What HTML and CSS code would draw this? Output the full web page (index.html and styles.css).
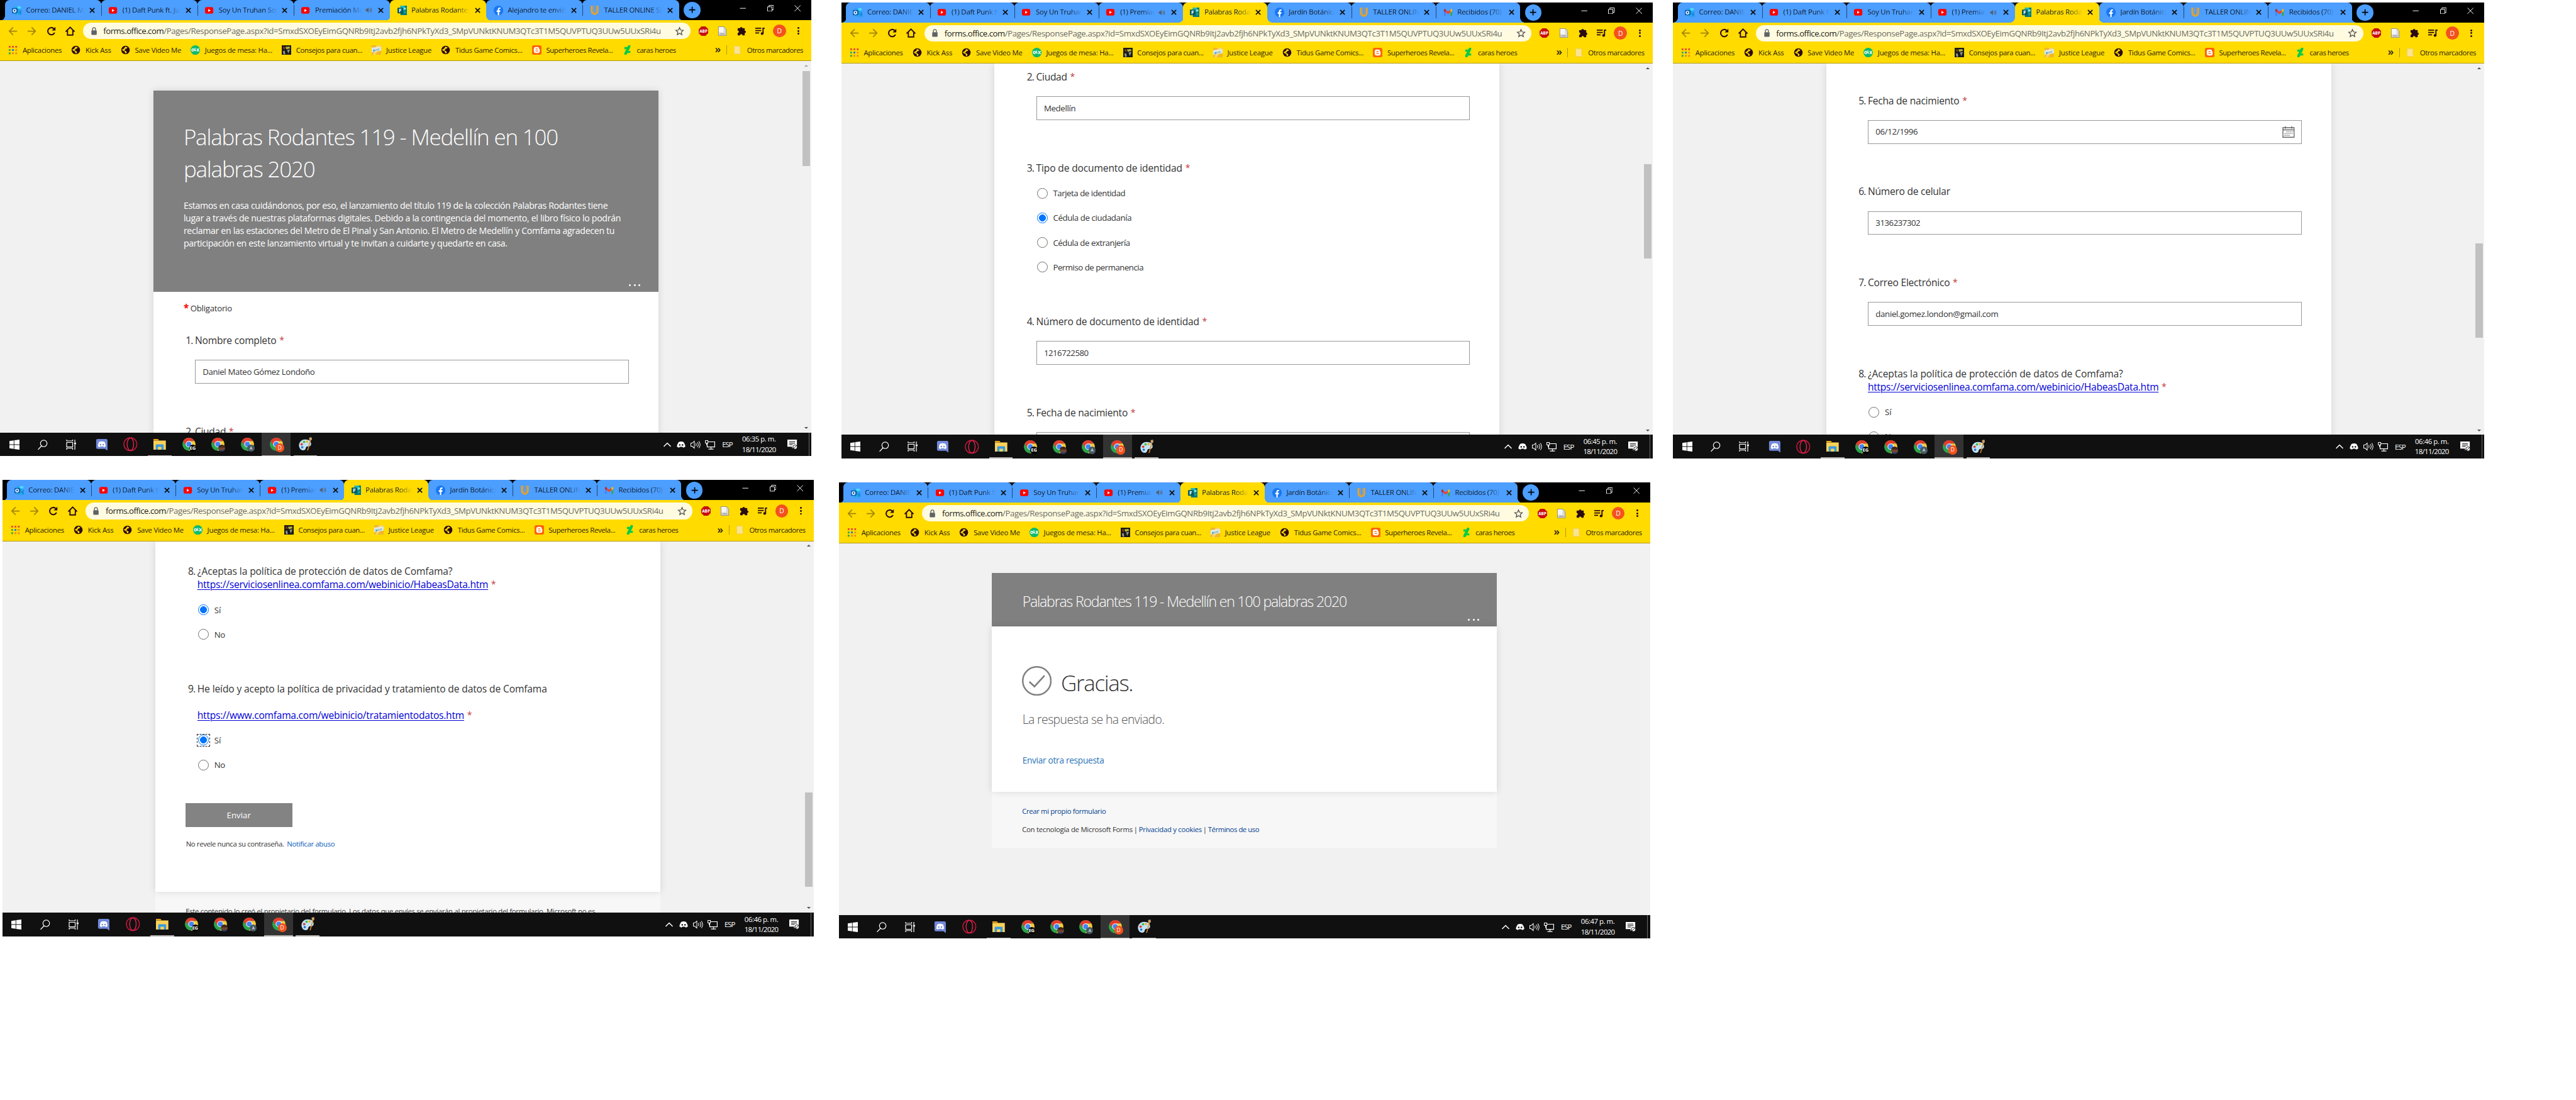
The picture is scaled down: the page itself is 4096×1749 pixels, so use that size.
FILE: index.html
```html
<!DOCTYPE html>
<html lang="es">
<head>
<meta charset="utf-8">
<title>Palabras Rodantes 119</title>
<link rel="stylesheet" href="styles.css">
</head>
<body>
<svg width="0" height="0" class="sprite" aria-hidden="true">
  <symbol id="outlook" viewBox="0 0 16 16"><path fill="#28a8ea" d="M4 1h11v9H4z"/><path fill="#50d9ff" d="M9 1h6v4H9z"/><path fill="#0364b8" d="M4 5h6v6H4z"/><path fill="#1490df" d="M4 15l12-8v8H4z"/><path fill="#28a8ea" d="M5 8l11 8H5z"/><rect x="0" y="4" width="9" height="9" rx="1" fill="#0a5fb4"/><circle cx="4.5" cy="8.500" r="2.300" fill="none" stroke="#fff" stroke-width="1.500"/></symbol>
  <symbol id="youtube" viewBox="0 0 16 16"><rect x="1" y="2.500" width="14" height="11" rx="3" fill="#f00"/><path fill="#fff" d="M6.500 5.500l4 2.500-4 2.500z"/></symbol>
  <symbol id="forms" viewBox="0 0 16 16"><path fill="#037b7f" d="M5 0h11v16H5z"/><path fill="#20b8bc" d="M5 0h7v8H5z"/><circle cx="12.500" cy="5" r="2" fill="#7fe3e0"/><circle cx="12.500" cy="11" r="2" fill="#1aa3a6"/><rect y="3.500" width="9.500" height="9.500" rx="1" fill="#035c60"/><path fill="none" stroke="#fff" stroke-width="1.400" d="M3.600 11V6h3.200M3.600 8.400h2.700"/></symbol>
  <symbol id="facebook" viewBox="0 0 16 16"><circle cx="8" cy="8" r="8" fill="#1877f2"/><path fill="#fff" d="M6.900 16v-5.500H5V8h1.900V6.300c0-2 1.200-3.100 2.900-3.100l1.600.1v2h-1c-.9 0-1.200.5-1.200 1.100V8h2.100l-.4 2.500H9.200V16z"/></symbol>
  <symbol id="u" viewBox="0 0 16 16"><path fill="none" stroke="#e8a22a" stroke-width="3" d="M3 0v9q0 3.500 5 5.300Q13 12.500 13 9V0"/><path fill="none" stroke="#c9a050" d="M6 0v9q0 2 2 2.500Q10 11 10 9V0"/></symbol>
  <symbol id="gmail" viewBox="0 0 16 16"><path fill="#4285f4" d="M1 6l3 2v6H2q-1 0-1-1z"/><path fill="#34a853" d="M12 8l3-2v7q0 1-1 1h-2z"/><path fill="#ea4335" d="M4 4l4 3 4-3v4l-4 3-4-3z"/><path fill="#c5221f" d="M1 4q0-2 2-1.500L4 3.300V8L1 6z"/><path fill="#fbbc04" d="M15 4q0-2-2-1.500l-1 .8V8l3-2z"/></symbol>
  <symbol id="x" viewBox="0 0 16 16"><path fill="none" stroke="#111" stroke-width="1.900" d="M4.200 4.200l7.600 7.600M11.800 4.200l-7.600 7.600"/></symbol>
  <symbol id="audio" viewBox="0 0 16 16"><path fill="#555f70" d="M3 6h2l3-3v10L5 10H3z"/><path fill="none" stroke="#555f70" stroke-width="1.200" d="M10 5.500q1.500 2.500 0 5M12 4q2.500 4 0 8"/></symbol>
  <symbol id="plus" viewBox="0 0 16 16"><path fill="none" stroke="#000" stroke-width="2" d="M8 2v12M2 8h12"/></symbol>
  <symbol id="back" viewBox="0 0 16 16"><path fill="none" stroke="#a4850a" stroke-width="1.900" d="M15 8H2M8.300 1.500L2 8l6.300 6.500"/></symbol>
  <symbol id="fwd" viewBox="0 0 16 16"><path fill="none" stroke="#a4850a" stroke-width="1.900" d="M1 8h13M7.700 1.500L14 8l-6.300 6.500"/></symbol>
  <symbol id="reload" viewBox="0 0 16 16"><path fill="none" stroke="#2b0b12" stroke-width="2.200" d="M13.600 10.500A6 6 0 1 1 12.300 3.700"/><path fill="#2b0b12" d="M15 .8V7H8.800z"/></symbol>
  <symbol id="home" viewBox="0 0 16 16"><path fill="none" stroke="#2b0b12" stroke-width="2" d="M3.500 14.500V8H1.400L8 1.400 14.600 8h-2.100v6.500z"/></symbol>
  <symbol id="lock" viewBox="0 0 16 16"><rect x="3.500" y="6.500" width="9" height="7.800" rx="1" fill="#5f6368"/><path fill="none" stroke="#5f6368" stroke-width="1.500" d="M5.500 7V4.500a2.500 2.500 0 0 1 5 0V7"/></symbol>
  <symbol id="star" viewBox="0 0 16 16"><path fill="none" stroke="#4c4a4a" stroke-width="1.300" d="M8 2l1.800 4.100 4.500.4-3.400 3 1 4.400L8 11.600l-3.900 2.300 1-4.400-3.400-3 4.500-.4z"/></symbol>
  <symbol id="abp" viewBox="0 0 16 16"><path fill="#c70d12" d="M4.700 0h6.600L16 4.700v6.600L11.300 16H4.700L0 11.300V4.700z"/><text x="8" y="10.600" font-size="6.800" font-weight="700" text-anchor="middle" fill="#fff" textLength="13.500" lengthAdjust="spacingAndGlyphs">ABP</text></symbol>
  <symbol id="doc" viewBox="0 0 16 16"><path fill="#d9d9d9" stroke="#888" d="M1.500.500h9l4 4v11h-13z"/><path fill="#f6f6f6" d="M2 1h8v9H2z"/><path fill="#9a9a9a" d="M4 12h8v1.500H4z"/></symbol>
  <symbol id="puzzle" viewBox="0 0 16 16"><path fill="#2b0b12" d="M6 3a2 2 0 0 1 4 0h3q1 0 1 1v3.300a1.900 1.900 0 0 1 0 3.800V14q0 1-1 1h-2.800a2.100 2.100 0 0 0-4.200 0H3q-1 0-1-1v-3a2 2 0 0 0 0-4V4q0-1 1-1z"/></symbol>
  <symbol id="media" viewBox="0 0 16 16"><path fill="none" stroke="#2b0b12" stroke-width="2" d="M0 3h10M0 7h10M0 11h6.500M13 12V3h3"/><circle cx="11.500" cy="12" r="2.300" fill="#2b0b12"/></symbol>
  <symbol id="apps" viewBox="0 0 16 16"><path fill="#ea4335" d="M1 1h3v3H1zM6.500 1h3v3h-3zM12 1h3v3h-3z"/><path fill="#34a853" d="M1 6.500h3v3H1zM1 12h3v3H1z"/><path fill="#1a73e8" d="M6.500 6.500h3v3h-3z"/><path fill="#f08a1c" d="M12 6.500h3v3h-3zM6.500 12h3v3h-3zM12 12h3v3h-3z"/></symbol>
  <symbol id="globe" viewBox="0 0 16 16"><circle cx="8" cy="8" r="7.200" fill="#2b0b12"/><path fill="#ffdb00" d="M7.500 2.200l3.800 1.400-1.600 2-2 .2-.4 2-2.600.6 3.500 1 2 2-1.500 2.600-1.500-.8-.2-2.400L3.500 9 2 7.500l1.800-1L6 5z"/></symbol>
  <symbol id="olx" viewBox="0 0 16 16"><circle cx="8" cy="8" r="8" fill="#0dbb70"/><circle cx="3.900" cy="8" r="1.900" fill="none" stroke="#fff" stroke-width="1.400"/><path fill="none" stroke="#fff" stroke-width="1.400" d="M7.500 4.500v4.300h2M10.500 5.500l4 5M14.500 5.500l-4 5"/></symbol>
  <symbol id="photo" viewBox="0 0 16 16"><path fill="#1c1a16" d="M0 0h16v16H0z"/><path fill="#b7b43c" d="M6 3l7-1 1 3-6 2z"/><path fill="#7e3a1e" d="M2 2l3 1 1 3-3 1z"/><path fill="#8f9a90" d="M9 8l5-1-3 7zM2 10l3-1 1 6H3z"/></symbol>
  <symbol id="justice" viewBox="0 0 16 16"><path fill="#f2b72a" d="M0 0h16v16H0z"/><path fill="#d8e7f2" d="M0 4l16-2v7L0 12z"/><path fill="#4c9bd6" d="M2 8l11-3-1 3-9 3z"/><path fill="#fff0b0" d="M8 0h8L6 16H2z" opacity=".5"/></symbol>
  <symbol id="blogger" viewBox="0 0 16 16"><rect width="16" height="16" rx="3" fill="#ff6400"/><path fill="#fff" d="M6.500 3h2.600Q12 3 12 5.800q0 1.200 1 1.200v2.900Q13 13 9.900 13H6.200Q3 13 3 9.900V6q0-3 3.500-3z"/><path fill="none" stroke="#ff6400" stroke-width="1.300" stroke-linecap="round" d="M6.300 6.300H9M6.300 9.700h3.600"/></symbol>
  <symbol id="deviant" viewBox="0 0 16 16"><path fill="#05cc47" d="M13 0v3.200L9.700 9.500H13V13H8L6.600 16H3v-3.200l3.300-6.300H3V3h5L9.500 0z"/></symbol>
  <symbol id="folder" viewBox="0 0 16 16"><path fill="#fbe48f" stroke="#f0cf5c" d="M2.500 1.500h10v10h1v3h-11z"/></symbol>
  <symbol id="win" viewBox="0 0 16 16"><path fill="#fff" d="M0 2.200L6.800 1.200v6.300H0zM7.700 1.100L16 0v7.500H7.700zM0 8.500h6.800v6.300L0 13.800zM7.700 8.500H16V16l-8.300-1.100z"/></symbol>
  <symbol id="search" viewBox="0 0 16 16"><circle cx="9.500" cy="6" r="5.200" fill="none" stroke="#fff" stroke-width="1.200"/><path stroke="#fff" stroke-width="1.300" d="M6 10L.500 15.800"/></symbol>
  <symbol id="task" viewBox="0 0 16 16"><path fill="none" stroke="#fff" stroke-width="1.200" d="M1 4.500h9.500v7H1zM1 0v2h9.500V0M1 16v-2.300h9.500V16M14 0v4M14 8v8"/><path fill="#fff" d="M12.800 4.500h3v3h-3z"/></symbol>
  <symbol id="discord" viewBox="0 0 20 22"><path fill="#7289da" d="M2.500 1h15Q20 1 20 3.500V22l-4-3.500H2.500Q0 18.500 0 16V3.500Q0 1 2.500 1z"/><path fill="#fff" d="M5 6.500q5-2.500 10 0 2 4 1.800 7.500-1.600 1.300-3.300 1.400l-.9-1.400q-2.600.6-5.200 0l-.9 1.400Q4.800 15.300 3.200 14 3 10.500 5 6.500z"/><circle cx="7.600" cy="11" r="1.400" fill="#7289da"/><circle cx="12.400" cy="11" r="1.400" fill="#7289da"/></symbol>
  <symbol id="opera" viewBox="0 0 24 24"><circle cx="12" cy="12" r="11" fill="none" stroke="#c8163c" stroke-width="1.600"/><ellipse cx="12" cy="12" rx="5.500" ry="10.500" fill="none" stroke="#e0244c" stroke-width="1.500"/></symbol>
  <symbol id="explorer" viewBox="0 0 22 20"><path fill="#e8a416" d="M0 0h8l2 2.500H0z"/><path fill="#ffd257" d="M0 3h22v16H0z"/><path fill="#3a9bdc" d="M4 19v-8q0-1.500 1.500-1.500h11Q18 9.500 18 11v8h-4v-5H8v5z"/></symbol>
  <symbol id="chrome" viewBox="0 0 24 24"><circle cx="12" cy="12" r="11" fill="#2ca24c"/><path fill="#e33b2e" d="M2.500 6.500A11 11 0 0 1 21.500 6.500L12 7l-5 7z"/><path fill="#fcc934" d="M12 7h9.800A11 11 0 0 1 11.500 23l5-8.500z"/><circle cx="12" cy="12" r="5.300" fill="#fff"/><circle cx="12" cy="12" r="4.200" fill="#4285f4"/></symbol>
  <symbol id="paint" viewBox="0 0 24 24"><path fill="#bfe3f5" d="M12 4C4 4 0 11 2 17q2 6 8 5 3-1 3-4 1-3 5-2 4-1 4-5 0-7-10-7z"/><circle cx="6" cy="12" r="2" fill="#e23b2e"/><circle cx="10" cy="8" r="2" fill="#4bb543"/><circle cx="15" cy="7.500" r="2" fill="#f2b01e"/><circle cx="7" cy="17" r="2" fill="#2f73d0"/><path fill="#e0882a" d="M20 5l1.500.5L17 22l-2 1z"/><path fill="#c9a06a" d="M18.500 1l4-1 1 4-2.500 2-2-1z"/></symbol>
  <symbol id="chev" viewBox="0 0 16 16"><path fill="none" stroke="#fff" stroke-width="1.500" d="M2.500 11L8 5.500l5.500 5.500"/></symbol>
  <symbol id="discordw" viewBox="0 0 16 16"><path fill="#fff" d="M4 4q4-1.800 8 0 2.600 4 2.700 7-1.800 1.600-3.600 1.600L10.300 11.500H5.700L4.900 12.600Q3.100 12.600 1.300 11 1.400 8 4 4z"/><circle cx="5.800" cy="8.500" r="1.300" fill="#101010"/><circle cx="10.200" cy="8.500" r="1.300" fill="#101010"/></symbol>
  <symbol id="volume" viewBox="0 0 16 16"><path fill="none" stroke="#fff" d="M.5 5.500h2L6 2.500v11L2.500 10.500h-2zM8.300 5.800q1.500 2.200 0 4.400M10.800 4q3 4 0 8M13.200 2.500q4 5.500 0 11"/></symbol>
  <symbol id="net" viewBox="0 0 16 16"><path fill="none" stroke="#fff" stroke-width="1.200" d="M5 3.500h10.400v8H3.500V6M9.500 11.500V15M5.500 15h8"/><path fill="none" stroke="#fff" d="M.6 1.500h4v4h-4zM2.600 5.500V9"/></symbol>
  <symbol id="notif" viewBox="0 0 17 17"><path fill="#fff" d="M0 0h16v12h-5l-3 3v-3H0z"/><path stroke="#101010" stroke-width="1.100" d="M3 3.500h10M3 6h10M3 8.500h6"/><circle cx="13" cy="12.500" r="3.600" fill="#fff" stroke="#101010"/><path stroke="#101010" d="M10.800 14.500l4.500-4"/></symbol>
  <symbol id="calendar" viewBox="0 0 20 18"><path fill="none" stroke="#666" stroke-width="1.400" d="M1 2h18v15.300H1zM1 5.500h18"/><path stroke="#666" stroke-width="1.500" d="M5 0v3.500M15 0v3.500"/><path stroke="#777" stroke-width="1.600" stroke-dasharray="1.600 1.500" d="M6.800 8.500H17M3.700 11.300H17M3.700 14.200h9"/></symbol>
  <symbol id="check" viewBox="0 0 50 50"><circle cx="25" cy="25" r="23.700" fill="none" stroke="#808080" stroke-width="2.600"/><path fill="none" stroke="#808080" stroke-width="2.800" d="M12.500 26.500l8.500 8 17-18.500"/></symbol>
</svg>

<main class="desk">
  <section class="window w1" data-time="06:35 p. m." data-set="a">
    <div class="page">
      <div class="card first">
        <header class="banner big">
          <h1><span class="line"><b data-w="630">Palabras Rodantes 119 - Medellín en 100</b></span><span class="line"><b data-w="221">palabras 2020</b></span></h1>
          <p><span class="line"><b data-w="714">Estamos en casa cuidándonos, por eso, el lanzamiento del título 119 de la colección Palabras Rodantes tiene</b></span><span class="line"><b data-w="736">lugar a través de nuestras plataformas digitales. Debido a la contingencia del momento, el libro físico lo podrán</b></span><span class="line"><b data-w="725.500">reclamar en las estaciones del Metro de El Pinal y San Antonio. El Metro de Medellín y Comfama agradecen tu</b></span><span class="line"><b data-w="545">participación en este lanzamiento virtual y te invitan a cuidarte y quedarte en casa.</b></span></p>
          <span class="dots"><i></i><i></i><i></i></span>
        </header>
        <div class="required"><em>*</em><b data-w="70">Obligatorio</b></div>
        <div class="q"><span class="n">1.</span><div><div class="t"><b data-w="137">Nombre completo</b><em>*</em></div><div class="input"><b data-w="188.500">Daniel Mateo Gómez Londoño</b></div></div></div>
        <div class="q"><span class="n">2.</span><div><div class="t"><b data-w="52">Ciudad</b><em>*</em></div><div class="input"></div></div></div>
      </div>
      <div class="bar pale"><i class="up"></i><i class="thumb t1"></i><i class="down"></i></div>
    </div>
  </section>

  <section class="window w2" data-time="06:45 p. m." data-set="b">
    <div class="page">
      <div class="card s2">
        <div class="q"><span class="n">2.</span><div><div class="t"><b data-w="52">Ciudad</b><em>*</em></div><div class="input"><b data-w="53.500">Medellín</b></div></div></div>
        <div class="q opts"><span class="n">3.</span><div><div class="t"><b data-w="246">Tipo de documento de identidad</b><em>*</em></div>
          <label><i class="radio"></i><b data-w="121.500">Tarjeta de identidad</b></label>
          <label><i class="radio on"></i><b data-w="132">Cédula de ciudadanía</b></label>
          <label><i class="radio"></i><b data-w="129.500">Cédula de extranjería</b></label>
          <label><i class="radio"></i><b data-w="152">Permiso de permanencia</b></label></div></div>
        <div class="q"><span class="n">4.</span><div><div class="t"><b data-w="274.500">Número de documento de identidad</b><em>*</em></div><div class="input"><b data-w="75">1216722580</b></div></div></div>
        <div class="q"><span class="n">5.</span><div><div class="t"><b data-w="154">Fecha de nacimiento</b><em>*</em></div><div class="input"></div></div></div>
      </div>
      <div class="bar"><i class="up"></i><i class="thumb t2"></i><i class="down"></i></div>
    </div>
  </section>

  <section class="window w3" data-time="06:46 p. m." data-set="b">
    <div class="page">
      <div class="card s3">
        <div class="q"><span class="n">5.</span><div><div class="t"><b data-w="154">Fecha de nacimiento</b><em>*</em></div><div class="input"><b data-w="71">06/12/1996</b><svg class="cal"><use href="#calendar"/></svg></div></div></div>
        <div class="q"><span class="n">6.</span><div><div class="t"><b data-w="138.500">Número de celular</b></div><div class="input"><b data-w="75">3136237302</b></div></div></div>
        <div class="q"><span class="n">7.</span><div><div class="t"><b data-w="138">Correo Electrónico</b><em>*</em></div><div class="input"><b data-w="206.500">daniel.gomez.london@gmail.com</b></div></div></div>
        <div class="q opts"><span class="n">8.</span><div><div class="t"><b data-w="429.500">¿Aceptas la política de protección de datos de Comfama?</b></div><div class="t"><a><b data-w="489.500">https://serviciosenlinea.comfama.com/webinicio/HabeasData.htm</b></a><em>*</em></div>
          <label><i class="radio"></i><b data-w="11.500">Sí</b></label><label><i class="radio"></i><b data-w="18">No</b></label></div></div>
      </div>
      <div class="bar"><i class="up"></i><i class="thumb t3"></i><i class="down"></i></div>
    </div>
  </section>

  <section class="window w4" data-time="06:46 p. m." data-set="b">
    <div class="page">
      <div class="card s4">
        <div class="q opts"><span class="n">8.</span><div><div class="t"><b data-w="429.500">¿Aceptas la política de protección de datos de Comfama?</b></div><div class="t"><a><b data-w="489.500">https://serviciosenlinea.comfama.com/webinicio/HabeasData.htm</b></a><em>*</em></div>
          <label><i class="radio on"></i><b data-w="11.500">Sí</b></label><label><i class="radio"></i><b data-w="18">No</b></label></div></div>
        <div class="q opts last"><span class="n">9.</span><div><div class="t"><b data-w="588.500">He leído y acepto la política de privacidad y tratamiento de datos de Comfama</b></div><div class="t"></div><div class="t"><a><b data-w="449">https://www.comfama.com/webinicio/tratamientodatos.htm</b></a><em>*</em></div>
          <label><i class="radio on focus"></i><b data-w="11.500">Sí</b></label><label><i class="radio"></i><b data-w="18">No</b></label></div></div>
        <div class="send"><b data-w="40.500">Enviar</b></div>
        <div class="small abuse"><b data-w="165">No revele nunca su contraseña.</b><a><b data-w="80.500">Notificar abuso</b></a></div>
      </div>
      <div class="under"><div class="small"><b data-w="689">Este contenido lo creó el propietario del formulario. Los datos que envíes se enviarán al propietario del formulario. Microsoft no es</b></div></div>
      <div class="bar"><i class="up"></i><i class="thumb t4"></i><i class="down"></i></div>
    </div>
  </section>

  <section class="window w5" data-time="06:47 p. m." data-set="b">
    <div class="page">
      <header class="banner slim"><h2><b data-w="545.500">Palabras Rodantes 119 - Medellín en 100 palabras 2020</b></h2><span class="dots"><i></i><i></i><i></i></span></header>
      <div class="card thanks">
        <div class="done"><svg><use href="#check"/></svg><b data-w="121">Gracias.</b></div>
        <div class="sent"><b data-w="239">La respuesta se ha enviado.</b></div>
        <div class="again"><b data-w="137.500">Enviar otra respuesta</b></div>
      </div>
      <div class="under legal">
        <div class="small"><a><b data-w="141">Crear mi propio formulario</b></a></div>
        <div class="small"><b data-w="186">Con tecnología de Microsoft Forms</b><s>|</s><a><b data-w="106">Privacidad y cookies</b></a><s>|</s><a><b data-w="86">Términos de uso</b></a></div>
      </div>
    </div>
  </section>
</main>
<script src="app.js"></script>
</body>
</html>
```

FILE: styles.css
```css
html, body { margin: 0; }
body { width: 4096px; height: 1749px; overflow: hidden; background: #fff; font-family: "Open Sans", "Noto Sans", sans-serif; }
.sprite { position: absolute; }
b { font-weight: inherit; white-space: nowrap; }
em, i { font-style: normal; }
s { text-decoration: none; }
svg { display: block; flex: none; }

/* Five captured windows on a free canvas */
.desk { position: relative; width: 4336px; height: 1852px; zoom: 0.9446; }
.window { position: absolute; width: 1366px; height: 768px; display: flex; flex-direction: column; overflow: hidden; }
.w1 { left: 0; top: 0; }
.w2 { left: 1416px; top: 4px; }
.w3 { left: 2816px; top: 4px; }
.w4 { left: 4px; top: 808px; }
.w5 { left: 1412px; top: 812px; }

/* Browser chrome */
.strip { height: 34px; flex: none; background: #000; display: flex; align-items: center; padding-left: 8px; }
.tabs { width: 1135px; height: 34px; display: flex; }
.tab { position: relative; flex: 1 1 0; min-width: 0; height: 34px; box-sizing: border-box; display: flex; align-items: center; padding: 0 7px 0 12px; background: #4c9eff; border-radius: 8px 8px 0 0; font-size: 12px; color: #101a28; }
.tab .ico { width: 16px; height: 16px; margin-right: 8px; }
.tab .name { flex: 1; min-width: 0; overflow: hidden; white-space: nowrap; letter-spacing: -.22px; line-height: 20px; -webkit-mask-image: linear-gradient(90deg, #000 calc(100% - 22px), transparent); mask-image: linear-gradient(90deg, #000 calc(100% - 22px), transparent); }
.tab .aud { width: 15px; height: 15px; margin: 0 1px 0 4px; }
.tab .cls { width: 16px; height: 16px; margin-left: 5px; }
.tab + .tab:not(.active):not(.after)::before { content: ""; position: absolute; left: 0; top: 8px; width: 1px; height: 19px; background: #24466e; }
.tab.active { background: #ffdb00; z-index: 2; }
.tab.active::before, .tab:first-child::before { content: ""; position: absolute; left: -8px; bottom: 0; width: 8px; height: 8px; background: radial-gradient(circle at 0 0, transparent 8px, #ffdb00 8.500px); }
.tab.active::after, .tab:last-child::after { content: ""; position: absolute; right: -8px; bottom: 0; width: 8px; height: 8px; background: radial-gradient(circle at 100% 0, transparent 8px, #ffdb00 8.500px); }
.tab:first-child::before { background: radial-gradient(circle at 0 0, transparent 8px, #4c9eff 8.500px); }
.tab:last-child::after { background: radial-gradient(circle at 100% 0, transparent 8px, #4c9eff 8.500px); }
.newtab { width: 28px; height: 28px; margin-left: 8px; border-radius: 50%; background: #4c9eff; display: grid; place-items: center; }
.newtab svg { width: 14px; height: 14px; }
.winbtns { width: 138px; height: 28px; align-self: flex-start; margin-left: 49px; display: grid; grid-template-columns: repeat(3, 46px); place-items: center; }
.winbtns svg { width: 11px; height: 11px; fill: none; stroke: #fff; stroke-width: 1; }
.toolbar { height: 36px; flex: none; background: #ffdb00; display: flex; align-items: center; padding-left: 14px; }
.nav { display: flex; gap: 16px; }
.nav svg { width: 16px; height: 16px; }
.omni { width: 1022px; height: 28px; margin-left: 14px; box-sizing: border-box; border-radius: 14px; background: #fffbe0; display: flex; align-items: center; padding: 0 10px; font-size: 14px; color: #6d6b63; }
.omni svg { width: 16px; height: 16px; }
.omni .url { flex: 1; padding-left: 8px; display: flex; }
.omni .host { color: #1d1b16; }
.ext { display: flex; align-items: center; }
.ext svg { width: 16px; height: 16px; margin-left: 16px; }
.ext svg:first-child { margin-left: 14px; }
.avatar { width: 22px; height: 22px; margin-left: 13px; border-radius: 50%; background: #f4511e; color: #fff; font-size: 11px; display: grid; place-items: center; }
.kebab { margin-left: 20px; display: grid; gap: 2px; }
.kebab i { width: 3px; height: 3px; border-radius: 50%; background: #2b0b12; }
.marks { height: 33px; flex: none; box-sizing: border-box; background: #ffdb00; border-bottom: 1px solid #b39b12; display: flex; align-items: center; padding: 0 14px 4px 14px; font-size: 12px; color: #2a1c08; }
.mark { display: flex; align-items: center; gap: 8px; margin-right: 16px; line-height: 18px; }
.mark svg { width: 16px; height: 16px; }
.more { margin-left: auto; font-size: 18px; font-weight: 600; line-height: 18px; padding-bottom: 3px; }
.cut { width: 1px; height: 16px; background: #b39b12; margin: 0 10px 0 9px; }
.marks .mark:last-child { margin-right: 0; }

/* Page viewport */
.page { position: relative; height: 625px; flex: none; box-sizing: border-box; overflow: hidden; background: #f1f1f1; padding-left: 258px; }
.card { width: 850px; min-height: 680px; box-sizing: border-box; background: #fff; box-shadow: 0 0 12px rgba(0, 0, 0, .12); color: #333; }
.first { margin-top: 50px; }
.s2 { padding-top: 11.700px; }
.s3 { padding-top: 51.400px; }
.s4 { padding-top: 40.200px; min-height: 0; height: 590px; }
.banner { position: relative; width: 850px; box-sizing: border-box; background: #808080; color: #fff; padding-left: 51px; }
.banner h1, .banner h2, .banner p { margin: 0; font-weight: 300; }
.line { display: block; }
.big { height: 338px; padding-top: 50.300px; }
.big h1 { font-size: 37px; line-height: 54px; }
.banner p { margin-top: 24.700px; font-size: 15px; font-weight: 400; line-height: 21px; }
.slim { height: 89px; margin-top: 50px; padding-top: 30px; }
.slim h2 { font-size: 24.500px; line-height: 34px; }
.dots { position: absolute; right: 30px; bottom: 9px; display: flex; gap: 5px; }
.dots i { width: 3px; height: 3px; border-radius: 50%; background: #fff; }
.required { display: flex; align-items: flex-start; padding: 18.600px 0 0 51px; font-size: 14px; line-height: 20px; margin-bottom: 32.800px; }
.required em { width: 11.500px; color: #f00; font-weight: 700; font-size: 16px; line-height: 18px; }
.q { display: grid; grid-template-columns: 15.600px 730px; padding-left: 54.600px; margin-bottom: 69.800px; font-size: 16.500px; line-height: 22px; }
.n { letter-spacing: -1px; }
.q.opts { margin-bottom: 60.300px; }
.q.opts.last { margin-bottom: 44px; }
.t { display: flex; height: 22px; }
.t em { margin-left: 5px; color: #c4393c; font-size: 15px; }
.t a { color: #0000d8; text-decoration: underline; text-underline-offset: 2px; text-decoration-thickness: 1px; }
.input { height: 40px; margin-top: 21.600px; box-sizing: border-box; border: 1px solid #999; display: flex; align-items: center; justify-content: space-between; padding: 0 10px 0 12px; font-size: 14px; }
.cal { width: 21px; height: 19px; }
label { display: flex; align-items: center; height: 41.400px; font-size: 14px; }
label:first-of-type { margin-top: 10.600px; }
label b { margin-left: 9px; padding-top: 1px; }
.radio { width: 18px; height: 18px; margin-left: 1.500px; box-sizing: border-box; border: 1.200px solid #6e6e6e; border-radius: 50%; flex: none; }
.radio.on { border: 1.500px solid #0075ff; background: radial-gradient(circle, #0075ff 5.500px, #fff 6px); }
.focus { outline: 1px dashed #222; outline-offset: 0; border-radius: 50%; position: relative; }
.radio.focus { outline: none; }
.radio.focus::after { content: ""; position: absolute; inset: -3px; border: 1px dashed #222; }
.send { width: 180px; height: 40px; margin-left: 50px; background: #838383; color: #fff; font-size: 14px; display: grid; place-items: center; }
.small { display: flex; font-size: 12px; line-height: 18px; }
.small a { color: #00408f; }
.abuse { padding: 19px 0 0 51px; gap: 5px; }
.abuse a { color: #0a5cb8; }
.under { width: 850px; height: 94px; box-sizing: border-box; background: #f7f7f7; color: #333; padding: 24px 0 0 50.500px; }
.s4, .thanks { position: relative; z-index: 1; }
.thanks { min-height: 0; height: 279px; padding: 64px 0 0 50px; }
.done { display: flex; align-items: center; gap: 16px; font-size: 37px; font-weight: 300; line-height: 50px; }
.done svg { width: 50px; height: 50px; }
.done b { padding-top: 6px; }
.sent { margin-top: 22px; font-size: 20.500px; font-weight: 300; line-height: 30px; color: #555; padding-left: 1px; }
.again { margin-top: 43px; font-size: 14.500px; line-height: 22px; color: #2b74b8; padding-left: 1px; }
.legal { padding-top: 23.500px; }
.legal .small { margin-bottom: 12px; }
.legal s { width: 10.500px; text-align: center; }

.bar { position: absolute; top: 0; right: 0; width: 17px; height: 625px; background: #f1f1f1; }
.bar i { position: absolute; left: 2px; width: 13px; }
.thumb { background: #c1c1c1; }
.bar .up, .bar .down { left: 5px; width: 0; border: 4px solid transparent; }
.bar .up { top: 3px; border-bottom-color: #505050; }
.pale .up { border-bottom-color: #a3a3a3; }
.bar .down { bottom: 3px; border-top-color: #505050; }
.t1 { top: 17px; height: 159px; }
.t2 { top: 169px; height: 159px; }
.t3 { top: 303px; height: 159px; }
.t4 { top: 423px; height: 159px; }

/* Windows taskbar */
.taskbar { height: 40px; flex: none; background: #101010; display: flex; color: #fff; font-size: 12px; }
.sys, .app { height: 40px; display: grid; place-items: center; position: relative; }
.sys { width: 48px; }
.sys svg { width: 17px; height: 17px; }
.app { width: 49px; }
.sys + .app { margin-left: 2.500px; }
.app svg { width: 24px; height: 24px; }
.app svg.sm { width: 21px; height: 21px; }
.app.open::after { content: ""; position: absolute; left: 4.500px; right: 4.500px; bottom: 0; height: 2px; background: #b3b0aa; }
.app.cur { background: #333; }
.app.cur::after { left: 0; right: 0; }
.badge { position: absolute; left: 25px; top: 20px; width: 12px; height: 12px; border-radius: 50%; font-size: 7px; line-height: 12px; text-align: center; background: #455a64; }
.badge.d { width: 15px; height: 15px; left: 23px; top: 18px; line-height: 15px; font-size: 9px; background: #f4511e; }
.badge.e { background: #000; font-weight: 700; font-size: 8px; }
.badge.p { background: linear-gradient(#3b2018 20%, #7a4a30 60%, #16307a); }
.tray { margin-left: auto; display: flex; align-items: center; }
.tray svg { width: 17px; height: 17px; margin-right: 7.200px; }
.esp { margin-left: 4.500px; }
.clock { width: 57px; margin: 0 19px 0 16px; text-align: center; line-height: 17px; }
.clock div:first-child { height: 17px; }
.tray .note { margin-right: 19px; }
.peek { width: 1px; height: 40px; background: #6a6a6a; margin-right: 4px; }
```

FILE: app.js
```js
// Builds the browser chrome and the taskbar that every window shares.
const TABS = {
  a: [['outlook', 'Correo: DANIEL MATEO'], ['youtube', '(1) Daft Punk ft. Julian'], ['youtube', 'Soy Un Truhan Soy Un Señor'], ['youtube', 'Premiación Medellín', 1], ['forms', 'Palabras Rodantes 119'], ['facebook', 'Alejandro te envió un'], ['u', 'TALLER ONLINE SIMULACRO']],
  b: [['outlook', 'Correo: DANIEL MATEO'], ['youtube', '(1) Daft Punk ft. Julian'], ['youtube', 'Soy Un Truhan Soy'], ['youtube', '(1) Premiación', 1], ['forms', 'Palabras Rodantes'], ['facebook', 'Jardín Botánico de'], ['u', 'TALLER ONLINE SIM'], ['gmail', 'Recibidos (70) - d']]
};
const MARKS = [['apps', 'Aplicaciones', 66], ['globe', 'Kick Ass', 43], ['globe', 'Save Video Me', 78], ['olx', 'Juegos de mesa: Ha...', 113.5], ['photo', 'Consejos para cuan...', 111.5], ['justice', 'Justice League', 76.5], ['globe', 'Tidus Game Comics...', 113], ['blogger', 'Superheroes Revela...', 112.5], ['deviant', 'caras heroes', 66]];
const icon = (id, cls = '') => `<svg class="${cls}"><use href="#${id}"/></svg>`;

function chrome(set) {
  const tabs = TABS[set].map(([ic, name, audio], i) =>
    `<div class="tab${i === 4 ? ' active' : i === 5 ? ' after' : ''}">${icon(ic, 'ico')}<span class="name">${name}</span>${audio ? icon('audio', 'aud') : ''}${icon('x', 'cls')}</div>`).join('');
  const marks = MARKS.map(([ic, name, w]) => `<div class="mark">${icon(ic)}<b data-w="${w}">${name}</b></div>`).join('');
  return `<div class="strip"><div class="tabs">${tabs}</div><div class="newtab">${icon('plus')}</div>
    <div class="winbtns"><svg viewBox="0 0 11 11"><path d="M.5 5.500h10"/></svg><svg viewBox="0 0 11 11"><path d="M.5 3h7.500v7.500H.5zM3 3V.5h7.500V8H8"/></svg><svg viewBox="0 0 11 11"><path d="M.5.5l10 10M10.500.5l-10 10"/></svg></div></div>
    <div class="toolbar"><div class="nav">${icon('back')}${icon('fwd')}${icon('reload')}${icon('home')}</div>
    <div class="omni">${icon('lock')}<div class="url"><b class="host" data-w="101.5">forms.office.com</b><b data-w="837">/Pages/ResponsePage.aspx?id=SmxdSXOEyEimGQNRb9Itj2avb2fjh6NPkTyXd3_SMpVUNktKNUM3QTc3T1M5QUVPTUQ3UUw5UUxSRi4u</b></div>${icon('star')}</div>
    <div class="ext">${['abp', 'doc', 'puzzle', 'media'].map(n => icon(n)).join('')}<span class="avatar">D</span><span class="kebab"><i></i><i></i><i></i></span></div></div>
    <div class="marks">${marks}<span class="more">»</span><span class="cut"></span><div class="mark">${icon('folder')}<b data-w="94.5">Otros marcadores</b></div></div>`;
}

function taskbar(time) {
  const app = (inner, cls = '') => `<div class="app ${cls}">${inner}</div>`;
  const sys = n => `<div class="sys">${icon(n)}</div>`;
  return `<div class="taskbar">${sys('win')}${sys('search')}${sys('task')}${app(icon('discord', 'sm'))}${app(icon('opera'))}${app(icon('explorer', 'sm'), 'open')}
    ${app(icon('chrome') + '<span class="badge e">EG</span>')}${app(icon('chrome') + '<span class="badge p"></span>')}${app(icon('chrome') + '<span class="badge">A</span>')}${app(icon('chrome') + '<span class="badge d">D</span>', 'open cur')}${app(icon('paint'), 'open')}
    <div class="tray">${icon('chev')}${icon('discordw')}${icon('volume')}${icon('net')}<span class="esp"><b data-w="17.6">ESP</b></span>
    <div class="clock"><div><b data-w="56.5">${time}</b></div><div><b data-w="57">18/11/2020</b></div></div>${icon('notif', 'note')}<span class="peek"></span></div></div>`;
}

document.querySelectorAll('.window').forEach(win => {
  win.insertAdjacentHTML('afterbegin', chrome(win.dataset.set));
  win.insertAdjacentHTML('beforeend', taskbar(win.dataset.time));
});

// Tracks each text run out to its width in layout pixels.
const scale = document.querySelector('.window').getBoundingClientRect().width / 1366;
document.querySelectorAll('b[data-w]').forEach(run => {
  const range = document.createRange();
  range.selectNodeContents(run);
  const natural = range.getBoundingClientRect().width / scale;
  const gap = (parseFloat(run.dataset.w) - natural) / run.textContent.length;
  run.style.letterSpacing = gap.toFixed(3) + 'px';
});
```
